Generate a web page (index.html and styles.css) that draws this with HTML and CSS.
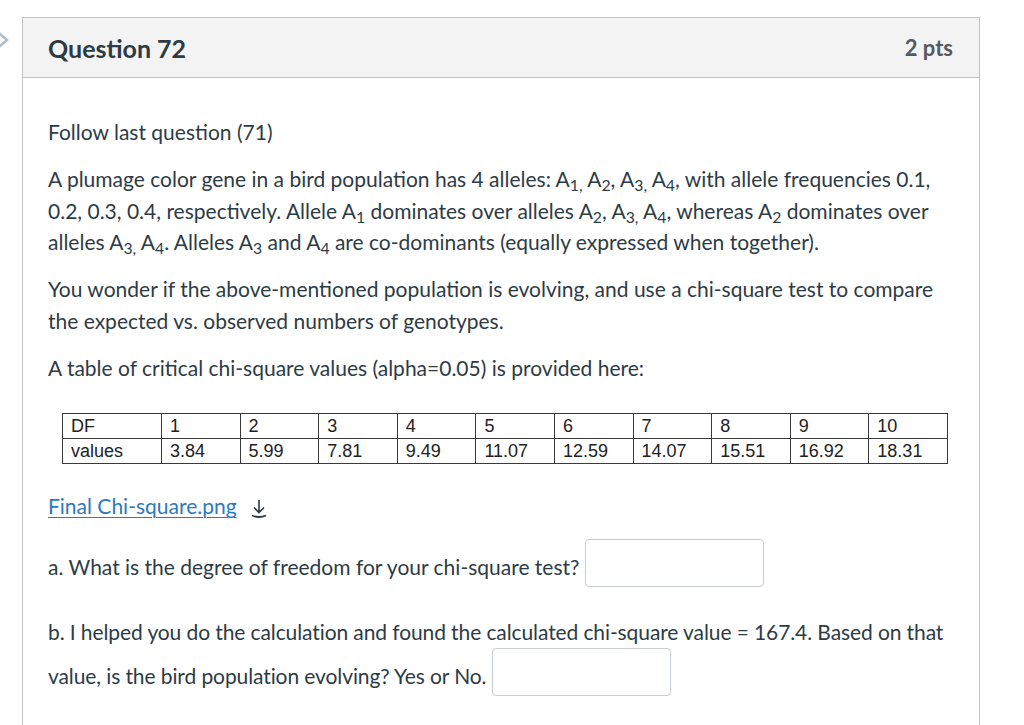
FILE: index.html
```html
<!DOCTYPE html>
<html>
<head>
<meta charset="utf-8">
<link rel="stylesheet" href="styles.css">
</head>
<body>
<div class="page">
  <svg class="nav-chevron" width="14" height="18" viewBox="0 0 14 18"><path d="M2 1 L11 9 L2 17" fill="none" stroke="#aebdcb" stroke-width="2.4"/></svg>
  <div class="card">
    <div class="card-header">
      <h2 class="title">Question 72</h2>
      <span class="pts">2 pts</span>
    </div>
    <div class="card-body">
      <p>Follow last question (71)</p>
      <p>A plumage color gene in a bird population has 4 alleles: A<sub>1,</sub> A<sub>2</sub>, A<sub>3,</sub> A<sub>4</sub>, with allele frequencies 0.1, 0.2, 0.3, 0.4, respectively. Allele A<sub>1</sub> dominates over alleles A<sub>2</sub>, A<sub>3,</sub> A<sub>4</sub>, whereas A<sub>2</sub> dominates over alleles A<sub>3,</sub> A<sub>4</sub>. Alleles A<sub>3</sub> and A<sub>4</sub> are co-dominants (equally expressed when together).</p>
      <p>You wonder if the above-mentioned population is evolving, and use a chi-square test to compare the expected vs. observed numbers of genotypes.</p>
      <p>A table of critical chi-square values (alpha=0.05) is provided here:</p>
      <table class="chi">
        <colgroup><col class="c-head"><col class="c-val"><col class="c-val"><col class="c-val"><col class="c-val"><col class="c-val"><col class="c-val"><col class="c-val"><col class="c-val"><col class="c-val"><col class="c-val"></colgroup>
        <tr><td>DF</td><td>1</td><td>2</td><td>3</td><td>4</td><td>5</td><td>6</td><td>7</td><td>8</td><td>9</td><td>10</td></tr>
        <tr><td>values</td><td>3.84</td><td>5.99</td><td>7.81</td><td>9.49</td><td>11.07</td><td>12.59</td><td>14.07</td><td>15.51</td><td>16.92</td><td>18.31</td></tr>
      </table>
      <p class="file"><a href="#" class="file-link">Final Chi-square.png</a><svg class="dl" width="18" height="20" viewBox="0 0 18 20"><path d="M9 2 V14 M4 9.5 L9 14.5 L14 9.5" fill="none" stroke="#2d3b45" stroke-width="1.6"/><path d="M2 17.5 Q9 20.5 16 17.5" fill="none" stroke="#2d3b45" stroke-width="1.8"/></svg></p>
      <p class="qa">a. What is the degree of freedom for your chi-square test? <input class="answer" type="text"></p>
      <p class="qb">b. I helped you do the calculation and found the calculated chi-square value = 167.4. Based on that value, is the bird population evolving? Yes or No. <input class="answer" type="text"></p>
    </div>
  </div>
</div>
</body>
</html>
```
FILE: styles.css
```css
html, body {
  margin: 0;
  padding: 0;
  background: #ffffff;
}
body {
  font-family: Lato, "Open Sans", sans-serif;
  color: #2d3b45;
  overflow: hidden;
}
.page {
  position: relative;
  padding: 17px 0 0 22px;
}
.nav-chevron {
  position: absolute;
  left: -4px;
  top: 31px;
}
.card {
  width: 956px;
  border: 1px solid #c1c4c7;
  border-bottom: none;
  min-height: 720px;
}
.card-header {
  height: 59px;
  background: #f3f3f3;
  border-bottom: 1px solid #c1c4c7;
  display: flex;
  align-items: center;
  justify-content: space-between;
  padding: 0 26px 0 25px;
}
.title {
  margin: 0;
  font-size: 25px;
  font-weight: 700;
  color: #2d3b45;
}
.pts {
  font-size: 22px;
  font-weight: 700;
  color: #555a5e;
}
.card-body {
  padding: 38px 26px 0 25px;
  font-size: 21px;
  line-height: 31.5px;
}
.card-body p {
  margin: 0 0 15.5px 0;
}
sub {
  font-size: 0.75em;
  line-height: 0;
  vertical-align: -0.28em;
}
.chi {
  border-collapse: collapse;
  table-layout: fixed;
  width: 885px;
  margin: 30px 0 26px 14px;
  font-family: "Liberation Sans", Arial, sans-serif;
  font-size: 18px;
  line-height: 20px;
  color: #222;
}
.c-head {
  width: 99px;
}
.c-val {
  width: 78.6px;
}
.chi td {
  border: 1px solid #3a3a3a;
  padding: 2px 8px 2px 8px;
  height: 20px;
  vertical-align: middle;
}
.file {
  display: flex;
  align-items: center;
  gap: 13px;
}
.file-link {
  color: #2b7abc;
  text-decoration: underline;
  text-decoration-thickness: 1px;
  text-underline-offset: 3px;
}
.dl {
  margin-top: 4px;
}
.qa {
  padding-top: 8px;
  margin-bottom: 20.5px !important;
}
.qa, .qb {
  line-height: 44px;
}
.qb {
  letter-spacing: -0.1px;
}
.answer {
  width: 179px;
  height: 48px;
  box-sizing: border-box;
  border: 1px solid #c7cdd1;
  border-radius: 4px;
  vertical-align: 7px;
  font-size: 16px;
  margin: -12px 0;
  padding: 0 10px;
}
```
